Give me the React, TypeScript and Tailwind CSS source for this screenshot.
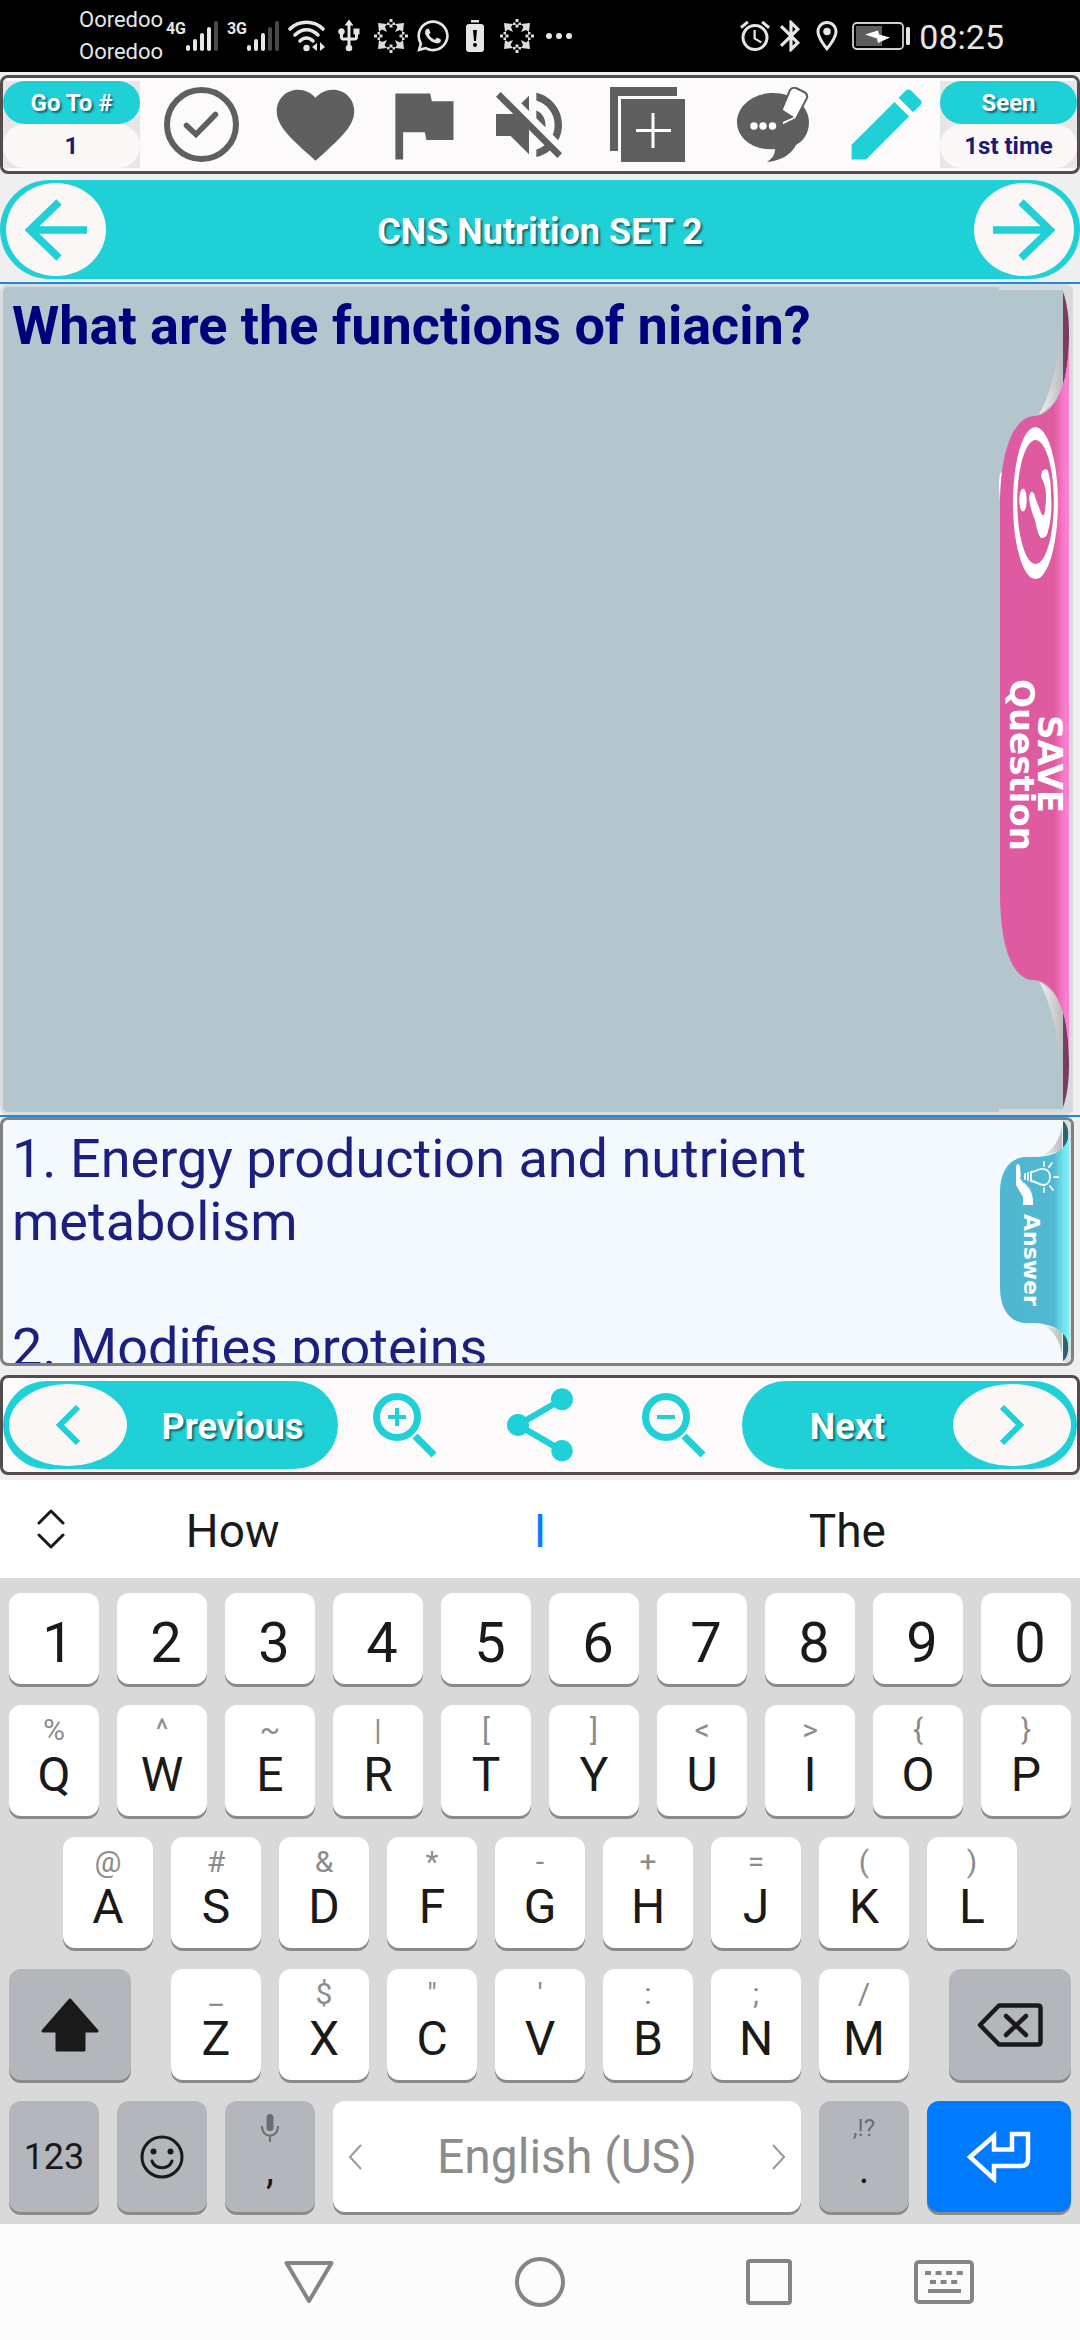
import React from "react";
import {
  MdAlarm,
  MdBluetooth,
  MdEdit,
  MdFavorite,
  MdFlag,
  MdOutlineLocationOn,
  MdShare,
  MdUsb,
  MdVolumeOff,
} from "react-icons/md";
import { FaWhatsapp } from "react-icons/fa";

const numberRow = ["1", "2", "3", "4", "5", "6", "7", "8", "9", "0"];
const topRow = [
  ["Q", "%"],
  ["W", "^"],
  ["E", "~"],
  ["R", "|"],
  ["T", "["],
  ["Y", "]"],
  ["U", "<"],
  ["I", ">"],
  ["O", "{"],
  ["P", "}"],
];
const middleRow = [
  ["A", "@"],
  ["S", "#"],
  ["D", "&"],
  ["F", "*"],
  ["G", "-"],
  ["H", "+"],
  ["J", "="],
  ["K", "("],
  ["L", ")"],
];
const bottomRow = [
  ["Z", "_"],
  ["X", "$"],
  ["C", '"'],
  ["V", "'"],
  ["B", ":"],
  ["N", ";"],
  ["M", "/"],
];

const keyBase = "rounded-xl shadow-[0_3px_0_#8a8a8a] text-[#1a1a1a]";
const grayKey = keyBase + " h-[111px] flex-none bg-[#b3b7bc] flex items-center justify-center";
const whiteShadow = "text-white [text-shadow:2px_2px_2px_rgba(0,0,0,0.5)]";

function Signal({ label, level }: { label: string; level: number }) {
  return (
    <div className="flex w-[49px] h-[30px] items-start">
      <span className="w-[17px] flex justify-end text-base leading-4 font-bold">{label}</span>
      <svg viewBox="0 0 32 30" className="w-8 h-[30px] flex-none">
        {[0, 1, 2, 3, 4].map((i) => (
          <rect
            key={i}
            x={i * 7}
            y={24 - i * 6}
            width="4"
            height={6 + i * 6}
            rx="2"
            fill={i < level ? "#e6e6e6" : "#4a4a4a"}
          />
        ))}
      </svg>
    </div>
  );
}

function Swirl() {
  return (
    <svg viewBox="-17 -17 34 34" className="size-[34px]" fill="#dcdcdc">
      {[0, 90, 180, 270].map((a) => (
        <g key={a} transform={`rotate(${a})`}>
          <path d="M-1.500 -17h3v3h-3z M-4 -13.500h2.500v2.500h-2.500z M1.500 -13.500h2.500v2.500h-2.500z M-1.500 -11.500h3v3h-3z" />
          <path d="M4 -12 L13 -13 L12 -4 L9 -6 L4 -4 L6.500 -9z" />
        </g>
      ))}
    </svg>
  );
}

function StatusBar() {
  const box = "w-[42px] flex justify-center";
  return (
    <div className="h-[72px] bg-black text-[#e6e6e6] flex items-center justify-between pl-[79px] pr-[76px]">
      <div className="flex items-center">
        <div className="w-[90px] text-[22px] leading-8">
          <div>Ooredoo</div>
          <div>Ooredoo</div>
        </div>
        <div className="flex gap-3 pr-[7px]">
          <Signal label="4G" level={4} />
          <Signal label="3G" level={3} />
        </div>
        <div className={box}>
          <svg viewBox="0 0 38 32" className="w-[38px] h-8" fill="none" stroke="#e6e6e6" strokeWidth="3.500" strokeLinecap="round">
            <path d="M2 9 C11 0 26 0 35 9" />
            <path d="M7 15 C14 8 23 8 30 15" />
            <path d="M12 21 C16 17 21 17 25 21" />
            <circle cx="18.500" cy="28" r="3.200" fill="#e6e6e6" stroke="none" />
            <path d="M29 23v8l-5-4z M32 22v9l5-4z" fill="#e6e6e6" stroke="none" />
          </svg>
        </div>
        <div className={box}>
          <MdUsb className="size-9" />
        </div>
        <div className={box}>
          <Swirl />
        </div>
        <div className={box}>
          <FaWhatsapp className="size-9" />
        </div>
        <div className={box}>
          <svg viewBox="0 0 18 32" className="w-[18px] h-8">
            <rect x="5" y="0" width="8" height="2.500" fill="#e6e6e6" />
            <rect x="0" y="4" width="18" height="28" rx="3" fill="#e6e6e6" />
            <path d="M7 10h4l-1 11h-2z" fill="#000" />
            <circle cx="9" cy="25" r="2" fill="#000" />
          </svg>
        </div>
        <div className={box}>
          <Swirl />
        </div>
        <div className={box}>
          <svg viewBox="0 0 26 6" className="w-[26px] h-1.5" fill="#e6e6e6">
            <circle cx="3" cy="3" r="3" />
            <circle cx="13" cy="3" r="3" />
            <circle cx="23" cy="3" r="3" />
          </svg>
        </div>
      </div>
      <div className="flex items-center">
        <div className="w-9 flex justify-center">
          <MdAlarm className="size-9" />
        </div>
        <div className="w-9 flex justify-center">
          <MdBluetooth className="size-[38px] flex-none" />
        </div>
        <div className="w-9 flex justify-center">
          <MdOutlineLocationOn className="size-9" />
        </div>
        <svg viewBox="0 0 58 28" className="w-[58px] h-7 ml-[7px] mr-[9px]">
          <rect x="1" y="1" width="50" height="26" rx="3.500" fill="none" stroke="#d0d0d0" strokeWidth="1.800" />
          <rect x="4" y="4" width="26" height="20" fill="#5c5c5c" />
          <path d="M13 12.500L26 8.500L27 12.500L38 15.500L26 21L25 16.500z" fill="#fff" />
          <rect x="54" y="5" width="4" height="18" rx="1.500" fill="#e6e6e6" />
        </svg>
        <span className="text-[34px] leading-10 pt-0.5">08:25</span>
      </div>
    </div>
  );
}

function Counter({ title, value }: { title: string; value: string }) {
  return (
    <button className="w-[137px] flex-none bg-[#e7e6e7] text-2xl font-bold text-center">
      <span className={"block h-[43px] leading-[45px] rounded-full bg-[#1fd0d7] " + whiteShadow}>
        {title}
      </span>
      <span className="block h-11 leading-[45px] rounded-full bg-[#faf7f6] text-[#1a1a78]">
        {value}
      </span>
    </button>
  );
}

function Toolbar() {
  const btn = "flex items-center justify-center";
  return (
    <div className="mt-[3px] h-[99px] border-[3px] border-[#544c4c] rounded-lg bg-[#fcfafb] py-[3px] flex text-[#5f5f5f]">
      <Counter title="Go To #" value="1" />
      <div className="flex-1 grid grid-rows-1 grid-cols-[123fr_105fr_108fr_106fr_129fr_122fr_106fr]">
        <button className={btn} aria-label="Mark done">
          <svg viewBox="0 0 75 75" className="size-[75px]" fill="none" stroke="currentColor">
            <circle cx="37.500" cy="37.500" r="34.500" strokeWidth="6" />
            <path d="M22.500 38.500L32 47.500L51.500 27.500" strokeWidth="5.500" strokeLinecap="round" />
          </svg>
        </button>
        <button className={btn} aria-label="Favourite">
          <MdFavorite className="size-[93px] flex-none" />
        </button>
        <button className={btn} aria-label="Flag">
          <MdFlag className="size-[93px] flex-none" />
        </button>
        <button className={btn} aria-label="Mute">
          <MdVolumeOff className="size-[88px] flex-none" />
        </button>
        <button className={btn} aria-label="Add card">
          <svg viewBox="0 0 75 75" className="size-[75px]">
            <path d="M0 0H67V9H8V64H0z" fill="currentColor" />
            <rect x="11" y="12" width="64" height="63" fill="currentColor" />
            <path d="M26 43.500H61M43 26V61" stroke="#fff" strokeWidth="3" />
          </svg>
        </button>
        <button className={btn} aria-label="Comment">
          <svg viewBox="0 0 72 75" className="w-[72px] h-[75px]">
            <path
              d="M36 6C56 6 72 19 72 35C72 47 66 54 59 58C54 68 43 74 30 75C36 71 38 67 38 62C16 64 0 51 0 35C0 19 16 6 36 6z"
              fill="currentColor"
            />
            <circle cx="17" cy="39" r="3.700" fill="#fff" />
            <circle cx="26" cy="39" r="3.700" fill="#fff" />
            <circle cx="35.500" cy="39" r="3.700" fill="#fff" />
            <path
              d="M53 3Q55 0 59 1L67 5Q71 7 70 11L59 32L45 39L45 22z"
              fill="#fff"
              stroke="currentColor"
              strokeWidth="2"
            />
            <path d="M46 23L57 30L46 35z" fill="currentColor" />
          </svg>
        </button>
        <button className={btn + " text-[#1fd0d7]"} aria-label="Edit">
          <MdEdit className="size-[93px] flex-none" />
        </button>
      </div>
      <Counter title="Seen" value="1st time" />
    </div>
  );
}

function Arrow({ right }: { right?: boolean }) {
  return (
    <svg viewBox="0 0 62 62" className="size-[62px]" fill="none" stroke="#1fd0d7" strokeWidth="7.500">
      {right ? <path d="M0 31H57M28 3L57 31L28 59" /> : <path d="M62 31H5M34 3L5 31L34 59" />}
    </svg>
  );
}

function Chevron({ right }: { right?: boolean }) {
  return (
    <svg viewBox="0 0 26 42" className="w-[26px] h-[42px]" fill="none" stroke="#1fd0d7" strokeWidth="6">
      {right ? <path d="M3 3L21 21L3 39" /> : <path d="M23 3L5 21L23 39" />}
    </svg>
  );
}

function Magnifier({ plus }: { plus?: boolean }) {
  return (
    <svg viewBox="0 0 65 65" className="size-[65px]" fill="none" stroke="#1fd0d7">
      <circle cx="24" cy="24" r="20.500" strokeWidth="7" />
      <path d="M15 24H33" strokeWidth="4" />
      {plus && <path d="M24 15V33" strokeWidth="4" />}
      <path d="M42 43L61 62" strokeWidth="7" />
    </svg>
  );
}

// page-curl tab with the "save question" label
function SaveTab() {
  return (
    <button className="absolute right-0 top-0 w-[74px] h-[825px]" aria-label="SAVE Question">
      <svg viewBox="0 0 74 825" className="w-[74px] h-[825px]">
        <defs>
          <linearGradient id="pink" x1="0" x2="1" y1="0" y2="0">
            <stop offset="0" stopColor="#de5ba2" />
            <stop offset="0.780" stopColor="#de5ba0" />
            <stop offset="0.930" stopColor="#fb7acb" />
            <stop offset="1" stopColor="#ff82d4" />
          </linearGradient>
          <linearGradient id="curl" x1="0" x2="1" y1="0" y2="0">
            <stop offset="0" stopColor="#f2f2f2" />
            <stop offset="1" stopColor="#bdbdbd" />
          </linearGradient>
        </defs>
        <path d="M0 0H74V825H0V822H64L70 790V30L64 3H0z" fill="#d5dadc" />
        <path d="M63 30C61 70 53 105 40 128L63 110z" fill="url(#curl)" />
        <path d="M63 795C61 755 53 718 40 694L63 712z" fill="url(#curl)" />
        <path d="M64 5C72 25 72 68 64 100z" fill="#7f3a62" />
        <path d="M64 820C72 800 72 755 64 722z" fill="#7f3a62" />
        <path d="M0 200Q0 182 4 186L2 230zM2 600L8 640L13 662z" fill="#fff" />
        <path
          d="M70 55C69 105 52 128 36 129C16 129 1 160 1 220V605C1 662 14 690 32 693C54 692 69 720 70 770z"
          fill="url(#pink)"
        />
        <path
          fillRule="evenodd"
          d="M36.500 140A22.500 76 0 1 1 36.400 140zM36.500 153A18.300 62 0 1 0 36.600 153z"
          fill="#fff"
        />
        <ellipse cx="24" cy="213" rx="3.700" ry="11.500" fill="#fff" />
        <path
          d="M30 210C31 220 33 226 36 233C38 243 40 251 43 251C46 251 48 249 49 244C52 234 53 222 52 208C52 198 51 190 49 184C48 181 44 182 43 185C42 188 42 190 43 192C46 198 47 203 47 209C47 217 46 225 45 228C43 229 42 226 41 223C39 219 38 214 36 210C35 204 31 203 30 210z"
          fill="#fff"
        />
      </svg>
      <span className="absolute inset-0 pt-[130px] flex flex-row-reverse items-center justify-center font-['DejaVu_Sans',sans-serif] font-bold text-[34px] leading-7 text-white">
        <span className="[writing-mode:vertical-rl]">SAVE</span>
        <span className="[writing-mode:vertical-rl]">Question</span>
      </span>
    </button>
  );
}

function AnswerTab() {
  return (
    <button className="absolute right-0 top-0 w-[72px] h-[242px]" aria-label="Answer">
      <svg viewBox="0 0 72 242" className="w-[72px] h-[242px]">
        <defs>
          <linearGradient id="teal" x1="0" x2="1" y1="0" y2="0">
            <stop offset="0" stopColor="#50b6d1" />
            <stop offset="0.780" stopColor="#50b9d1" />
            <stop offset="0.930" stopColor="#74e6ee" />
            <stop offset="1" stopColor="#7cf1f6" />
          </linearGradient>
        </defs>
        <path d="M64 0H72V242H64L70 225V15z" fill="#dcdfe1" />
        <path d="M63 6C61 20 53 31 42 37L63 30z" fill="url(#curl)" />
        <path d="M63 234C61 220 53 209 42 203L63 211z" fill="url(#curl)" />
        <path d="M64 1C71 6 71 22 64 30z" fill="#2b6670" />
        <path d="M64 241C71 236 71 220 64 210z" fill="#2b6670" />
        <path
          d="M70 14C69 28 56 37 36 37H26C10 38 1 52 1 72V168C1 188 10 202 26 203H36C56 204 69 213 70 227z"
          fill="url(#teal)"
        />
        {/* open hand */}
        <path d="M17 46Q19 42 21 46L22 59L30 68Q33 72 34 80V85H24V77L17 65z" fill="#fff" />
        <path d="M21 57L25 63" stroke="#50b6d1" strokeWidth="1.200" />
        {/* light bulb */}
        <g fill="none" stroke="#fff" strokeWidth="1.800" strokeLinecap="round">
          <path d="M32 52C37 52 39 48 45 49C53 50 53 64 45 65C39 65 37 61 32 61z" />
          <path d="M29 53V60M26 54V59M45 42V46M45 68V72M50 47L53 43M51 66L54 70M55 57H59" />
        </g>
      </svg>
      <span className="absolute inset-0 pt-[38px] pr-2 flex items-center justify-center font-['DejaVu_Sans',sans-serif] font-bold text-[22px] leading-6 text-white">
        <span className="[writing-mode:vertical-rl]">Answer</span>
      </span>
    </button>
  );
}

function Key({ letter, hint }: { letter: string; hint: string }) {
  return (
    <button className={keyBase + " h-[111px] flex-1 bg-white pt-[7px] flex flex-col items-center"}>
      <span className="text-3xl leading-9 text-[#8c8c8c]">{hint}</span>
      <span className="text-5xl leading-[54px]">{letter}</span>
    </button>
  );
}

function Keyboard() {
  return (
    <div className="bg-[#d9d9d9] px-[9px] pt-[15px] pb-3 flex flex-col gap-[21px]">
      <div className="flex gap-[18px]">
        {numberRow.map((n) => (
          <button key={n} className={keyBase + " h-[91px] flex-1 bg-white pt-2 pl-2 text-[56px] leading-[66px]"}>
            {n}
          </button>
        ))}
      </div>
      <div className="flex gap-[18px]">
        {topRow.map(([letter, hint]) => (
          <Key key={letter} letter={letter} hint={hint} />
        ))}
      </div>
      <div className="flex gap-[18px] px-[54px]">
        {middleRow.map(([letter, hint]) => (
          <Key key={letter} letter={letter} hint={hint} />
        ))}
      </div>
      <div className="flex gap-10">
        <button className={grayKey + " w-[122px]"} aria-label="Shift">
          <svg viewBox="0 0 58 54" className="w-[58px] h-[54px]" fill="#1a1a1a" stroke="#1a1a1a" strokeWidth="3" strokeLinejoin="round">
            <path d="M29 2L56 33H43V52H16V33H2z" />
          </svg>
        </button>
        <div className="flex flex-1 gap-[18px]">
          {bottomRow.map(([letter, hint]) => (
            <Key key={letter} letter={letter} hint={hint} />
          ))}
        </div>
        <button className={grayKey + " w-[122px]"} aria-label="Backspace">
          <svg viewBox="0 0 66 44" className="w-[66px] h-11" fill="none" stroke="#1a1a1a" strokeWidth="4.500" strokeLinejoin="round" strokeLinecap="round">
            <path d="M22 2.500H61Q63.500 2.500 63.500 5V39Q63.500 41.500 61 41.500H22L3 22z" />
            <path d="M29 13L49 32M49 13L29 32" />
          </svg>
        </button>
      </div>
      <div className="flex gap-[18px]">
        <button className={grayKey + " w-[90px] text-4xl"}>123</button>
        <button className={grayKey + " w-[90px]"} aria-label="Emoji">
          <svg viewBox="0 0 44 44" className="size-11" fill="none" stroke="#1a1a1a" strokeWidth="3">
            <circle cx="22" cy="22" r="20" />
            <path d="M12 26C15 35 29 35 32 26" strokeLinecap="round" />
            <circle cx="13.500" cy="16.500" r="3" fill="#1a1a1a" stroke="none" />
            <circle cx="30.500" cy="16.500" r="3" fill="#1a1a1a" stroke="none" />
          </svg>
        </button>
        <button className={keyBase + " h-[111px] w-[90px] bg-[#b3b7bc] pt-3 flex flex-col items-center"}>
          <svg viewBox="0 0 18 30" className="w-[18px] h-[30px]" fill="none" stroke="#6a6e72" strokeWidth="2">
            <rect x="5.500" y="1" width="7" height="17" rx="3.500" fill="#6a6e72" stroke="none" />
            <path d="M1 13C1 26 17 26 17 13M9 23V29" />
          </svg>
          <span className="text-[40px] leading-[54px]">,</span>
        </button>
        <button className={keyBase + " h-[111px] flex-1 bg-white px-4 flex items-center justify-between"}>
          <svg viewBox="0 0 13 26" className="w-[13px] h-[26px]" fill="none" stroke="#9a9a9a" strokeWidth="2">
            <path d="M12 1L1 13L12 25" />
          </svg>
          <span className="text-5xl leading-[54px] text-[#8c8c8c]">English (US)</span>
          <svg viewBox="0 0 13 26" className="w-[13px] h-[26px]" fill="none" stroke="#9a9a9a" strokeWidth="2">
            <path d="M1 1L12 13L1 25" />
          </svg>
        </button>
        <button className={keyBase + " h-[111px] w-[90px] bg-[#b3b7bc] pt-3 flex flex-col items-center"}>
          <span className="text-2xl leading-[30px] text-[#6a6e72]">,!?</span>
          <span className="text-[40px] leading-[54px]">.</span>
        </button>
        <button
          className="h-[111px] w-36 rounded-xl bg-[#007bff] shadow-[0_3px_0_#8a8a8a] flex items-center justify-center"
          aria-label="Enter"
        >
          <svg viewBox="0 0 64 52" className="w-16 h-[52px]" fill="none" stroke="#fff" strokeWidth="4.500">
            <path d="M3 26L27 5V18.500H45V3H61V28Q61 35 54 35H27V48z" />
          </svg>
        </button>
      </div>
    </div>
  );
}

function NavBar() {
  const btn = "flex items-center justify-center";
  return (
    <div className="h-[116px] bg-[#fcfcfc] grid grid-cols-[194fr_230fr_232fr_225fr_126fr_73fr]">
      <button className={btn + " col-start-2"} aria-label="Back">
        <svg viewBox="0 0 50 44" className="w-[50px] h-11" fill="none" stroke="#858585" strokeWidth="4" strokeLinejoin="round">
          <path d="M2.500 3H47.500L25 41z" />
        </svg>
      </button>
      <button className={btn} aria-label="Home">
        <svg viewBox="0 0 50 50" className="size-[50px]" fill="none" stroke="#858585" strokeWidth="4">
          <circle cx="25" cy="25" r="23" />
        </svg>
      </button>
      <button className={btn} aria-label="Recent apps">
        <svg viewBox="0 0 46 46" className="size-[46px]" fill="none" stroke="#858585" strokeWidth="4">
          <rect x="2" y="2" width="42" height="42" rx="2" />
        </svg>
      </button>
      <button className={btn} aria-label="Switch keyboard">
        <svg viewBox="0 0 60 44" className="w-[60px] h-11" fill="none" stroke="#858585" strokeWidth="4">
          <rect x="2" y="2" width="56" height="40" rx="3" />
          <path d="M11 13H49" strokeDasharray="6 4.600" />
          <path d="M16 22H44" strokeDasharray="6 4.600" />
          <path d="M14 31H47" />
        </svg>
      </button>
    </div>
  );
}

export default function App() {
  return (
    <div className="min-h-screen bg-[#f0eff0] font-[Roboto,sans-serif] overflow-hidden">
      <StatusBar />
      <Toolbar />

      <div className="mt-1.5 h-[99px] rounded-full bg-[#1fd0d7] px-1.5 flex items-center justify-between">
        <button
          className="w-[100px] h-[93px] rounded-[50%] bg-[#faf7f6] flex items-center justify-center"
          aria-label="Previous set"
        >
          <Arrow />
        </button>
        <h1 className={"text-4xl font-bold pt-1 " + whiteShadow}>CNS Nutrition SET 2</h1>
        <button
          className="w-[100px] h-[93px] rounded-[50%] bg-[#faf7f6] flex items-center justify-center"
          aria-label="Next set"
        >
          <Arrow right />
        </button>
      </div>

      <div className="mt-[3px] border-y-2 border-[#1c8ad6]">
        <div className="relative mr-[7px] h-[831px] border-[3px] border-r-0 border-[#d8dee0] rounded-lg bg-[#b3c6ce] px-[9px] py-[7px] text-[54px] leading-[63px] font-bold text-[#00007c]">
          What are the functions of niacin?
          <SaveTab />
        </div>
      </div>

      <div className="relative mr-1.5 h-[249px] border-[3px] border-[#808080] rounded-lg bg-[#f4f9fd] overflow-hidden px-[9px] py-[7px] text-[54px] leading-[63px] text-[#1b1f7d]">
        <p>1. Energy production and nutrient metabolism</p>
        <p className="mt-[63px]">2. Modifies proteins</p>
        <AnswerTab />
      </div>

      <div className="mt-[9px] h-[100px] border-[3px] border-[#544c4c] rounded-lg bg-[#fcfafb] py-[3px] flex">
        <button className="w-[335px] flex-none rounded-full bg-[#1fd0d7] pl-1.5 flex items-center">
          <span className="w-[118px] h-[82px] rounded-[50%] bg-[#faf7f6] flex items-center justify-center">
            <Chevron />
          </span>
          <span className={"flex-1 text-4xl font-bold pt-1 " + whiteShadow}>Previous</span>
        </button>
        <div className="flex-1 grid grid-cols-3 text-[#1fd0d7]">
          <button className="flex items-center justify-center" aria-label="Zoom in">
            <Magnifier plus />
          </button>
          <button className="flex items-center justify-center" aria-label="Share">
            <MdShare className="size-[88px]" />
          </button>
          <button className="flex items-center justify-center" aria-label="Zoom out">
            <Magnifier />
          </button>
        </div>
        <button className="w-[335px] flex-none rounded-full bg-[#1fd0d7] pr-1.5 flex items-center">
          <span className={"flex-1 text-4xl font-bold pt-1 " + whiteShadow}>Next</span>
          <span className="w-[118px] h-[82px] rounded-[50%] bg-[#faf7f6] flex items-center justify-center">
            <Chevron right />
          </span>
        </button>
      </div>

      <div className="mt-[5px] h-[98px] bg-white flex items-center text-[46px] leading-[54px] text-[#1a1a1a]">
        <button className="w-[79px] pl-9" aria-label="Expand suggestions">
          <svg viewBox="0 0 30 40" className="w-[30px] h-10" fill="none" stroke="#1a1a1a" strokeWidth="3" strokeLinecap="round" strokeLinejoin="round">
            <path d="M3 14L15 2L27 14M3 26L15 38L27 26" />
          </svg>
        </button>
        <button className="flex-1 pt-1">How</button>
        <button className="flex-1 pt-1 text-[#0a7cff]">I</button>
        <button className="flex-1 pt-1 mr-[79px]">The</button>
      </div>

      <Keyboard />
      <NavBar />
    </div>
  );
}
